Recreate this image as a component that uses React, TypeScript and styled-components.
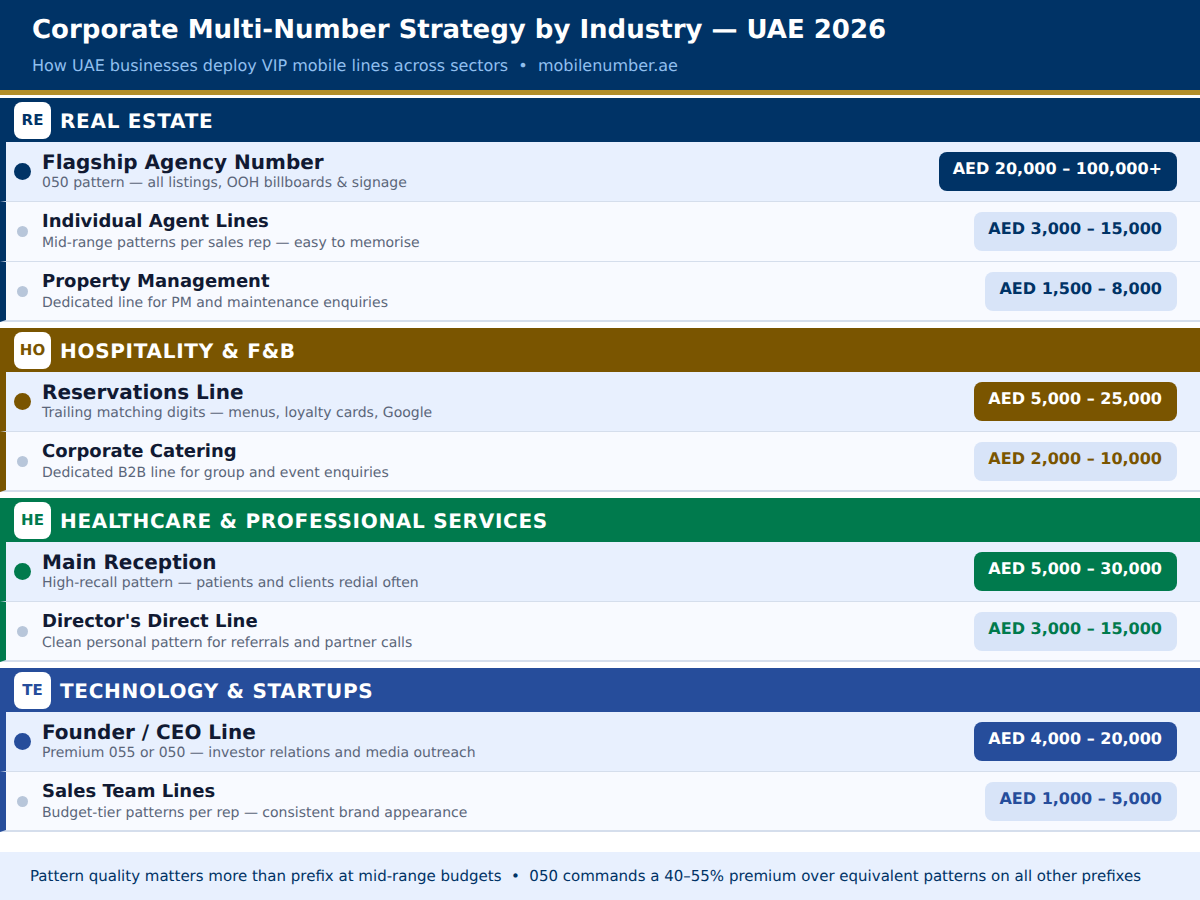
import React from 'react';
import styled, { createGlobalStyle } from 'styled-components';

const GlobalStyle = createGlobalStyle`
  html, body { margin: 0; padding: 0; background: #ffffff; }
  body { font-family: "DejaVu Sans", sans-serif; text-rendering: geometricPrecision; }
`;

const Page = styled.div`
  width: 1200px;
  height: 900px;
  overflow: hidden;
  display: flex;
  flex-direction: column;
`;

const Header = styled.header`
  height: 90px;
  box-sizing: border-box;
  background: #003366;
  padding: 15px 32px 0;
`;

const Title = styled.h1`
  margin: 0;
  font-size: 26px;
  line-height: 31px;
  font-weight: 700;
  color: #ffffff;
`;

const Subtitle = styled.div`
  margin-top: 10px;
  font-size: 16px;
  line-height: 19px;
  color: #90bfee;
`;

const GoldRule = styled.div`
  height: 5px;
  background: #b38f2b;
  margin-bottom: 3px;
`;

const Section = styled.section`
  margin-bottom: 6px;
`;

const SectionHead = styled.div<{ $color: string }>`
  height: 44px;
  box-sizing: border-box;
  background: ${(p) => p.$color};
  display: flex;
  align-items: center;
  gap: 9px;
  padding-left: 14px;
`;

const Badge = styled.div<{ $color: string }>`
  width: 37px;
  height: 37px;
  border-radius: 8px;
  background: #ffffff;
  color: ${(p) => p.$color};
  display: flex;
  align-items: center;
  justify-content: center;
  font-size: 15px;
  font-weight: 700;
`;

const SectionTitle = styled.div`
  font-size: 20px;
  line-height: 24px;
  font-weight: 700;
  letter-spacing: 0.7px;
  color: #ffffff;
  position: relative;
  top: 1px;
`;

const Row = styled.div<{ $color: string; $top: boolean; $last: boolean }>`
  height: 60px;
  box-sizing: border-box;
  display: flex;
  align-items: center;
  border-left: 6px solid ${(p) => p.$color};
  border-bottom: ${(p) => (p.$last ? 2 : 1)}px solid #d5deec;
  background: ${(p) => (p.$top ? '#e8f0fe' : '#f8faff')};
  padding-right: 23px;
`;

const DotSlot = styled.div`
  width: 33px;
  margin-right: 3px;
  display: flex;
  justify-content: center;
  flex-shrink: 0;
`;

const Dot = styled.div<{ $color: string; $top: boolean }>`
  width: ${(p) => (p.$top ? 17 : 11)}px;
  height: ${(p) => (p.$top ? 17 : 11)}px;
  border-radius: 50%;
  background: ${(p) => (p.$top ? p.$color : '#b8c6da')};
`;

const RowText = styled.div`
  flex: 1;
  min-width: 0;
`;

const RowTitle = styled.div<{ $top: boolean }>`
  font-size: ${(p) => (p.$top ? 20 : 18)}px;
  line-height: 22px;
  font-weight: 700;
  color: #111a33;
`;

const RowSub = styled.div`
  margin-top: 2px;
  font-size: 14px;
  line-height: 17px;
  color: #5b667a;
`;

const Price = styled.div<{ $color: string; $top: boolean }>`
  box-sizing: border-box;
  height: 39px;
  padding: 7px 15px 0 14px;
  border-radius: 8px;
  font-size: 16px;
  line-height: 19px;
  font-weight: 700;
  background: ${(p) => (p.$top ? p.$color : '#d8e4f8')};
  color: ${(p) => (p.$top ? '#ffffff' : p.$color)};
`;

const Footer = styled.footer`
  margin-top: 14px;
  height: 48px;
  background: #e8f0fe;
  display: flex;
  align-items: center;
  padding-left: 30px;
  font-size: 15px;
  color: #003366;
`;

const sections = [
  {
    code: 'RE',
    name: 'REAL ESTATE',
    color: '#003366',
    rows: [
      { title: 'Flagship Agency Number', sub: '050 pattern — all listings, OOH billboards & signage', price: 'AED 20,000 – 100,000+' },
      { title: 'Individual Agent Lines', sub: 'Mid-range patterns per sales rep — easy to memorise', price: 'AED 3,000 – 15,000' },
      { title: 'Property Management', sub: 'Dedicated line for PM and maintenance enquiries', price: 'AED 1,500 – 8,000' },
    ],
  },
  {
    code: 'HO',
    name: 'HOSPITALITY & F&B',
    color: '#7a5500',
    rows: [
      { title: 'Reservations Line', sub: 'Trailing matching digits — menus, loyalty cards, Google', price: 'AED 5,000 – 25,000' },
      { title: 'Corporate Catering', sub: 'Dedicated B2B line for group and event enquiries', price: 'AED 2,000 – 10,000' },
    ],
  },
  {
    code: 'HE',
    name: 'HEALTHCARE & PROFESSIONAL SERVICES',
    color: '#007a4d',
    rows: [
      { title: 'Main Reception', sub: 'High-recall pattern — patients and clients redial often', price: 'AED 5,000 – 30,000' },
      { title: "Director's Direct Line", sub: 'Clean personal pattern for referrals and partner calls', price: 'AED 3,000 – 15,000' },
    ],
  },
  {
    code: 'TE',
    name: 'TECHNOLOGY & STARTUPS',
    color: '#264d9b',
    rows: [
      { title: 'Founder / CEO Line', sub: 'Premium 055 or 050 — investor relations and media outreach', price: 'AED 4,000 – 20,000' },
      { title: 'Sales Team Lines', sub: 'Budget-tier patterns per rep — consistent brand appearance', price: 'AED 1,000 – 5,000' },
    ],
  },
];

const App = () => (
  <Page>
    <GlobalStyle />
    <Header>
      <Title>Corporate Multi-Number Strategy by Industry — UAE 2026</Title>
      <Subtitle>How UAE businesses deploy VIP mobile lines across sectors &nbsp;•&nbsp; mobilenumber.ae</Subtitle>
    </Header>
    <GoldRule />
    {sections.map((s) => (
      <Section key={s.code}>
        <SectionHead $color={s.color}>
          <Badge $color={s.color}>{s.code}</Badge>
          <SectionTitle>{s.name}</SectionTitle>
        </SectionHead>
        {s.rows.map((r, i) => (
          <Row key={r.title} $color={s.color} $top={i === 0} $last={i === s.rows.length - 1}>
            <DotSlot>
              <Dot $color={s.color} $top={i === 0} />
            </DotSlot>
            <RowText>
              <RowTitle $top={i === 0}>{r.title}</RowTitle>
              <RowSub>{r.sub}</RowSub>
            </RowText>
            <Price $color={s.color} $top={i === 0}>{r.price}</Price>
          </Row>
        ))}
      </Section>
    ))}
    <Footer>Pattern quality matters more than prefix at mid-range budgets &nbsp;•&nbsp; 050 commands a 40–55% premium over equivalent patterns on all other prefixes</Footer>
  </Page>
);

export default App;
